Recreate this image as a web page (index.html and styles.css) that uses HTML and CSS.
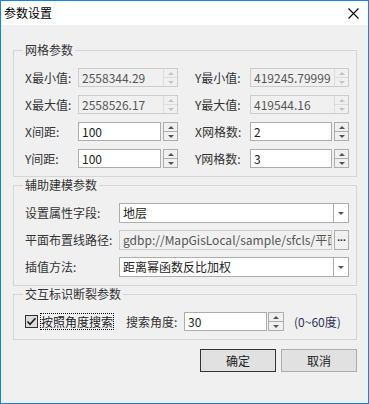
FILE: index.html
```html
<!DOCTYPE html>
<html>
<head>
<meta charset="utf-8">
<link rel="stylesheet" href="styles.css">
</head>
<body>
<div class="dialog">
  <div class="titlebar">
    <span class="title">参数设置</span>
    <svg class="close" width="11" height="11" viewBox="0 0 11 11"><path d="M0.5 0.5 L10.5 10.5 M10.5 0.5 L0.5 10.5" stroke="#000" stroke-width="1.1" fill="none"/></svg>
  </div>
  <div class="body">
    <fieldset class="group g1">
      <legend>网格参数</legend>
      <div class="grid">
        <span class="lbl">X最小值:</span>
        <div class="num dis"><span class="val">2558344.29</span><span class="spin"><i class="up"></i><i class="dn"></i></span></div>
        <span class="lbl r">Y最小值:</span>
        <div class="num dis"><span class="val">419245.79999</span><span class="spin"><i class="up"></i><i class="dn"></i></span></div>

        <span class="lbl">X最大值:</span>
        <div class="num dis"><span class="val">2558526.17</span><span class="spin"><i class="up"></i><i class="dn"></i></span></div>
        <span class="lbl r">Y最大值:</span>
        <div class="num dis"><span class="val">419544.16</span><span class="spin"><i class="up"></i><i class="dn"></i></span></div>

        <span class="lbl">X间距:</span>
        <div class="num en"><span class="val">100</span><span class="spin"><i class="up"></i><i class="dn"></i></span></div>
        <span class="lbl r">X网格数:</span>
        <div class="num en"><span class="val">2</span><span class="spin"><i class="up"></i><i class="dn"></i></span></div>

        <span class="lbl">Y间距:</span>
        <div class="num en"><span class="val">100</span><span class="spin"><i class="up"></i><i class="dn"></i></span></div>
        <span class="lbl r">Y网格数:</span>
        <div class="num en"><span class="val">3</span><span class="spin"><i class="up"></i><i class="dn"></i></span></div>
      </div>
    </fieldset>

    <fieldset class="group g2">
      <legend>辅助建模参数</legend>
      <div class="grid2">
        <span class="lbl">设置属性字段:</span>
        <div class="combo"><span class="txt">地层</span><span class="drop"><i></i></span></div>

        <span class="lbl">平面布置线路径:</span>
        <div class="path"><span class="txt">gdbp://MapGisLocal/sample/sfcls/平面</span><span class="more">...</span></div>

        <span class="lbl">插值方法:</span>
        <div class="combo"><span class="txt">距离幂函数反比加权</span><span class="drop"><i></i></span></div>
      </div>
    </fieldset>

    <fieldset class="group g3">
      <legend>交互标识断裂参数</legend>
      <div class="row3">
        <span class="check"><svg width="11" height="11" viewBox="0 0 11 11"><path d="M1.5 5.5 L4 8.2 L9.5 2.2" stroke="#1a1a1a" stroke-width="1.6" fill="none"/></svg></span>
        <span class="focus">按照角度搜索</span>
        <span class="lbl ang">搜索角度:</span>
        <div class="num en n3"><span class="val">30</span><span class="spin"><i class="up"></i><i class="dn"></i></span></div>
        <span class="range">(0~60度)</span>
      </div>
    </fieldset>

    <div class="footer">
      <button class="btn default">确定</button>
      <button class="btn">取消</button>
    </div>
  </div>
</div>
</body>
</html>
```
FILE: styles.css
```css
* { box-sizing: border-box; }
body {
  margin: 0;
  font: 12px/16px "Noto Sans CJK SC", "Microsoft YaHei", sans-serif;
  color: #333;
}
.dialog {
  width: 369px;
  height: 404px;
  border: 1px solid #1883d7;
  background: #f0f0f0;
  display: flex;
  flex-direction: column;
}
.titlebar {
  height: 24px;
  background: #fff;
  display: flex;
  align-items: center;
  justify-content: space-between;
  padding: 0 9px 0 3px;
  color: #000;
}
.title { font-size: 12px; }
.close { display: block; margin-top: 1px; }
.body {
  padding: 17px 11px 0 12px;
  display: flex;
  flex-direction: column;
}
fieldset.group {
  margin: 0;
  min-width: 0;
  border: 1px solid #d5d5d5;
  padding: 10px 7px 8px 11px;
}
legend {
  padding: 0 2px;
  margin-left: -2px;
  line-height: 16px;
  color: #333;
}
.g2 { margin-top: 10px; }
.g3 { margin-top: 8px; padding-top: 12px; padding-bottom: 7px; }

.grid {
  display: grid;
  grid-template-columns: 53px 100px minmax(0, 1fr) 99px;
  grid-auto-rows: 19px;
  row-gap: 8px;
  align-items: center;
}
.lbl { white-space: nowrap; color: #333; }
.lbl.r { padding-left: 17px; }

.num { display: flex; height: 19px; min-width: 0; }
.num .val {
  flex: 1;
  min-width: 0;
  overflow: hidden;
  white-space: nowrap;
  padding-left: 3px;
  line-height: 17px;
}
.num.dis {
  border: 1px solid #cccccc;
  background: #f0f0f0;
}
.num.dis .val { color: #555; }
.num.en { gap: 2px; }
.num.en .val {
  border: 1px solid #adadad;
  background: #fff;
  color: #222;
}
.spin {
  width: 15px;
  flex: none;
  display: flex;
  flex-direction: column;
}
.num.en .spin {
  border: 1px solid #adadad;
  background: #f0f0f0;
}
.num.dis .spin {
  width: 14px;
  border-left: 1px solid #dcdcdc;
}
.spin i {
  flex: 1;
  display: flex;
  align-items: center;
  justify-content: center;
}
.spin i + i { border-top: 1px solid #adadad; }
.num.dis .spin i + i { border-top-color: #dcdcdc; }
.spin i::before {
  content: "";
  width: 0;
  height: 0;
  border-left: 3px solid transparent;
  border-right: 3px solid transparent;
}
.spin i.up::before { border-bottom: 3px solid #555; }
.spin i.dn::before { border-top: 3px solid #555; }
.num.dis .spin i.up::before { border-bottom-color: #c4c4c4; }
.num.dis .spin i.dn::before { border-top-color: #c4c4c4; }

.grid2 {
  display: grid;
  grid-template-columns: 94px minmax(0, 1fr);
  grid-auto-rows: 20px;
  row-gap: 7px;
  align-items: center;
}
.combo, .path {
  display: flex;
  height: 20px;
  min-width: 0;
}
.combo {
  border: 1px solid #adadad;
  background: #fff;
}
.combo .txt, .path .txt {
  flex: 1;
  min-width: 0;
  overflow: hidden;
  white-space: nowrap;
  padding-left: 3px;
  line-height: 18px;
  color: #222;
}
.drop {
  width: 15px;
  flex: none;
  border-left: 1px solid #adadad;
  display: flex;
  align-items: center;
  justify-content: center;
}
.drop i {
  width: 0;
  height: 0;
  border-left: 3px solid transparent;
  border-right: 3px solid transparent;
  border-top: 3px solid #555;
}
.path { gap: 2px; }
.path .txt {
  border: 1px solid #cccccc;
  background: #f0f0f0;
  color: #555;
}
.path .more {
  width: 15px;
  flex: none;
  overflow: hidden;
  border: 1px solid #adadad;
  background: #f0f0f0;
  text-align: center;
  line-height: 14px;
  font: bold 10px/13px "Liberation Sans", sans-serif;
  letter-spacing: 0;
  color: #222;
}

.row3 {
  display: flex;
  align-items: center;
  height: 19px;
}
.check {
  width: 13px;
  height: 13px;
  border: 1px solid #333;
  background: #dcdcdc;
  display: flex;
  align-items: center;
  justify-content: center;
}
.focus {
  margin-left: 2px;
  border: 1px dotted #000;
  line-height: 15px;
  color: #222;
}
.ang { margin-left: 12px; width: 58px; }
.num.n3 { width: 100px; gap: 1px; }
.num.n3 .spin { width: 16px; }
.range { margin-left: 10px; color: #30305a; white-space: nowrap; }

.footer {
  margin-top: 9px;
  display: flex;
  justify-content: flex-end;
  gap: 5px;
}
.btn {
  width: 76px;
  height: 23px;
  border: 1px solid #adadad;
  background: #e1e1e1;
  font: inherit;
  color: #222;
  padding: 0;
}
.btn.default { border-color: #333; }
```
